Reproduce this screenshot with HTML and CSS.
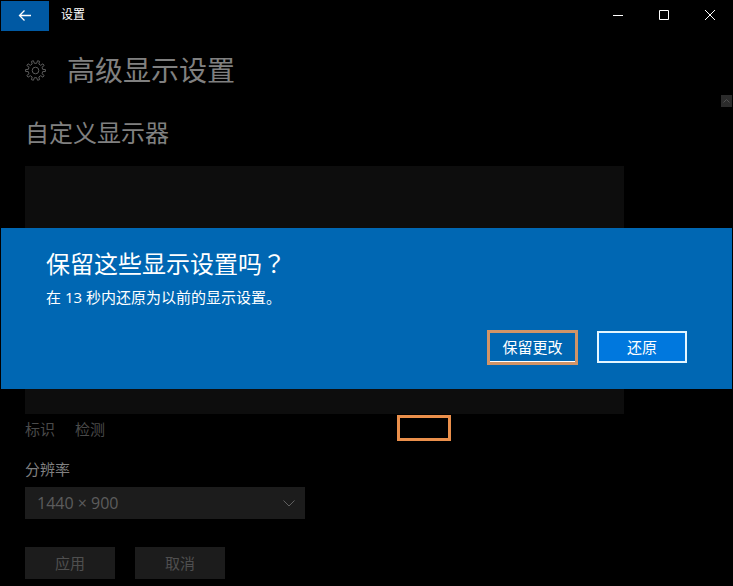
FILE: index.html
```html
<!DOCTYPE html>
<html lang="zh-CN">
<head>
    <meta charset="UTF-8">
    <meta name="viewport" content="width=device-width, initial-scale=1.0">
    <title>设置</title>
    <link rel="stylesheet" href="styles.css">
</head>
<body>
    <div class="window">
        <header class="titlebar">
            <button class="back" type="button" aria-label="返回">
                <svg width="14" height="12" viewBox="0 0 14 12"><path d="M13 5.5H1.5M6.5 .5L1.5 5.5l5 5"/></svg>
            </button>
            <span class="app-name">设置</span>
            <div class="window-controls">
                <button type="button" aria-label="最小化">
                    <svg width="10" height="10" viewBox="0 0 10 10"><path d="M0 5.5h10"/></svg>
                </button>
                <button type="button" aria-label="最大化">
                    <svg width="10" height="10" viewBox="0 0 10 10"><path d="M.5.5h9v9h-9z"/></svg>
                </button>
                <button type="button" aria-label="关闭">
                    <svg width="10" height="10" viewBox="0 0 10 10"><path d="M0 0l10 10M10 0L0 10"/></svg>
                </button>
            </div>
        </header>

        <div class="content">
            <main class="settings">
                <div class="page-title">
                    <svg class="gear" width="21" height="21" viewBox="-10.5 -10.5 21 21">
                        <path d="M7.2-1.1L9.9-1V1L7.2 1.1 6.5 3.3 8.7 5 7.4 6.7 5.2 5.2 3.3 6.5 4.1 9.1 2.1 9.8 1.1 7.2H-1.1L-2.1 9.8-4.1 9.1-3.3 6.5-5.2 5.2-7.4 6.7-8.7 5-6.5 3.3-7.2 1.1-9.9 1V-1L-7.2-1.1-6.5-3.3-8.7-5-7.4-6.7-5.2-5.2-3.3-6.5-4.1-9.1-2.1-9.8-1.1-7.2H1.1L2.1-9.8 4.1-9.1 3.3-6.5 5.2-5.2 7.4-6.7 8.7-5 6.5-3.3z"/>
                        <circle r="3.3"/>
                    </svg>
                    <h1>高级显示设置</h1>
                </div>
                <h2>自定义显示器</h2>
                <div class="preview"></div>
                <div class="links">
                    <a href="#">标识</a>
                    <a href="#">检测</a>
                    <span class="marker"></span>
                </div>
                <label for="resolution">分辨率</label>
                <div class="select-box">
                    <select id="resolution">
                        <option>1440 × 900</option>
                    </select>
                    <svg class="chevron" width="12" height="7" viewBox="0 0 12 7"><path d="M.5.5L6 6 11.5.5"/></svg>
                </div>
                <div class="actions">
                    <button type="button">应用</button>
                    <button type="button">取消</button>
                </div>
            </main>

            <button class="scroll-up" type="button" aria-label="向上滚动">
                <svg width="7" height="4" viewBox="0 0 7 4"><path d="M.5 3.5l3-3 3 3"/></svg>
            </button>

            <div class="overlay">
                <section class="dialog" role="dialog" aria-labelledby="dialogTitle">
                    <h3 id="dialogTitle">保留这些显示设置吗<span class="punct" lang="zh-TW">？</span></h3>
                    <p>在 13 秒内还原为以前的显示设置。</p>
                    <div class="dialog-buttons">
                        <button class="keep" type="button">保留更改</button>
                        <button class="revert" type="button">还原</button>
                    </div>
                </section>
            </div>
        </div>
    </div>
</body>
</html>
```
FILE: styles.css
```css
* {
    margin: 0;
    padding: 0;
    box-sizing: border-box;
}

body {
    font-family: "Open Sans", "Noto Sans CJK SC", sans-serif;
    font-size: 15px;
    line-height: 20px;
    background: #000;
    color: #fff;
}

button,
select {
    font: inherit;
    color: inherit;
    background: none;
    border: none;
    border-radius: 0;
}

svg {
    display: block;
    fill: none;
    stroke: currentColor;
}

h1,
h2,
h3 {
    font-weight: normal;
}

.window {
    display: flex;
    flex-direction: column;
    min-height: 100vh;
    padding: 1px;
}

/* title bar */
.titlebar {
    display: flex;
    align-items: flex-start;
    height: 30px;
}

.back {
    display: flex;
    align-items: center;
    justify-content: center;
    width: 48px;
    height: 30px;
    background: #0059a3;
}

.back svg {
    stroke-width: 1.3;
}

.app-name {
    margin-left: 12px;
    font-size: 12px;
    line-height: 28px;
}

.window-controls {
    display: flex;
    margin-left: auto;
    margin-right: -1px;
}

.window-controls button {
    display: flex;
    align-items: center;
    justify-content: center;
    width: 46px;
    height: 28px;
}

/* settings page */
.content {
    position: relative;
    display: flex;
    flex: 1;
}

.settings {
    display: flex;
    flex: 1;
    flex-direction: column;
    padding: 19px 108px 6px 24px;
    color: #4a4a4a;
}

.page-title {
    display: flex;
    align-items: center;
    gap: 21px;
}

.gear {
    color: #5c5c5c;
}

h1 {
    font-size: 28px;
    line-height: 40px;
    color: #808080;
}

h2 {
    margin: 27px 0 17px;
    font-size: 24px;
    line-height: 32px;
    color: #808080;
}

.preview {
    flex: 1;
    min-height: 120px;
    background: #0d0d0d;
}

.links {
    position: relative;
    display: flex;
    gap: 20px;
    margin: 5px 0 20px;
}

.links a {
    color: inherit;
    text-decoration: none;
}

.marker {
    position: absolute;
    top: -4px;
    left: 372px;
    width: 54px;
    height: 26px;
    border: 3px solid #ea8f4b;
}

label {
    margin-bottom: 8px;
    color: #808080;
}

.select-box {
    position: relative;
    width: 280px;
}

select {
    width: 100%;
    height: 32px;
    padding: 0 12px;
    font-size: 16px;
    background: #1c1c1c;
    color: #5c5c5c;
    appearance: none;
}

.chevron {
    position: absolute;
    top: 13px;
    right: 10px;
    color: #606060;
    pointer-events: none;
}

.actions {
    display: flex;
    gap: 20px;
    margin-top: 28px;
}

.actions button {
    width: 90px;
    height: 32px;
    background: #1c1c1c;
    color: #4f4f4f;
}

.scroll-up {
    position: absolute;
    top: 64px;
    right: 0;
    display: flex;
    align-items: center;
    justify-content: center;
    width: 11px;
    height: 12px;
    background: #2b2b2b;
    color: #505050;
}

/* confirmation dialog */
.overlay {
    position: absolute;
    inset: 0;
    display: flex;
    align-items: center;
}

.dialog {
    width: 100%;
    padding: 19px 45px 24px;
    background: #0067b3;
}

.dialog h3 {
    font-size: 24px;
    line-height: 32px;
}

/* full-width mark centred in its cell */
.punct {
    font-family: "Noto Sans CJK TC", sans-serif;
}

.dialog p {
    margin: 6px 0 22px;
    line-height: 22px;
}

.dialog-buttons {
    display: flex;
    align-items: center;
    justify-content: flex-end;
    gap: 19px;
}

.keep {
    width: 91px;
    height: 35px;
    border: 3px solid #d09468;
    box-shadow: inset 0 -1px #fff;
}

.revert {
    width: 90px;
    height: 32px;
    background: #0078de;
    border: 2px solid #e4f6ff;
}
```
